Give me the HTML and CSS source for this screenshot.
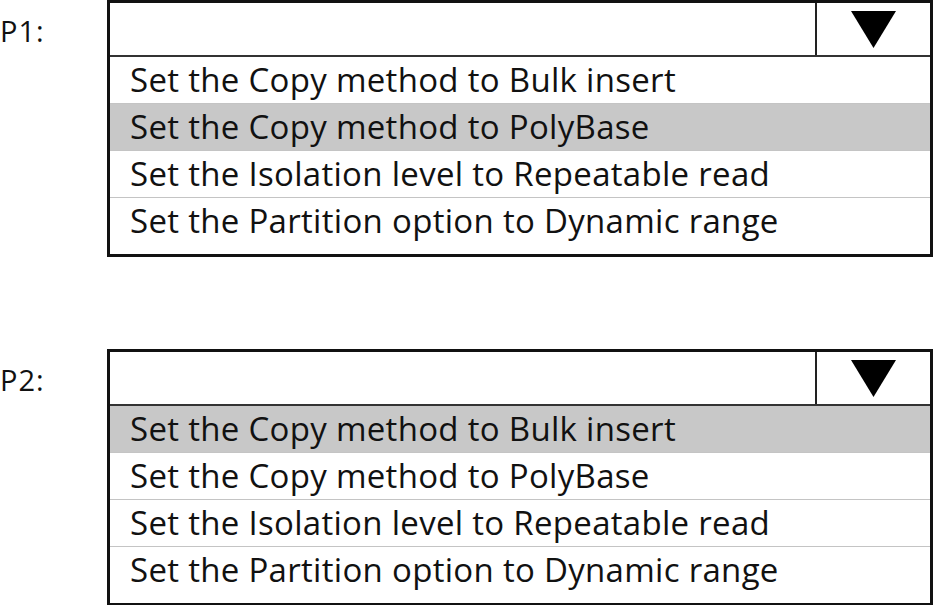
FILE: index.html
```html
<!DOCTYPE html>
<html lang="en">
<head>
  <meta charset="UTF-8">
  <title>Copy activity options</title>
  <link rel="stylesheet" href="styles.css">
</head>
<body>
<div class="page">
	<div class="field">
		<div class="label">P1:</div>
		<div class="dropdown">
			<div class="dropdown-head">
				<div class="value"></div>
				<div class="arrow">
					<svg width="45" height="37" viewBox="0 0 45 37"><polygon points="0,0 45,0 22.5,37" fill="#000"/></svg>
				</div>
			</div>
			<ul class="options">
				<li>Set the Copy method to Bulk insert</li>
				<li class="selected">Set the Copy method to PolyBase</li>
				<li>Set the Isolation level to Repeatable read</li>
				<li>Set the Partition option to Dynamic range</li>
			</ul>
		</div>
	</div>

	<div class="field">
		<div class="label">P2:</div>
		<div class="dropdown">
			<div class="dropdown-head">
				<div class="value"></div>
				<div class="arrow">
					<svg width="45" height="37" viewBox="0 0 45 37"><polygon points="0,0 45,0 22.5,37" fill="#000"/></svg>
				</div>
			</div>
			<ul class="options">
				<li class="selected">Set the Copy method to Bulk insert</li>
				<li>Set the Copy method to PolyBase</li>
				<li>Set the Isolation level to Repeatable read</li>
				<li>Set the Partition option to Dynamic range</li>
			</ul>
		</div>
	</div>
</div>
</body>
</html>
```

FILE: styles.css
```css
body {
	margin: 0;
	background: #fff;
	color: #111;
	font-family: "Open Sans", Lato, sans-serif;
	font-variant-ligatures: none;
}
.page {
	display: flex;
	flex-direction: column;
	gap: 92px;
}
.field {
	display: flex;
	align-items: flex-start;
}
.label {
	width: 107px;
	padding-top: 16px;
	font-size: 29px;
	line-height: 30px;
	letter-spacing: 1px;
}
.dropdown {
	width: 826px;
	border: 3px solid #111;
	box-sizing: border-box;
}
.dropdown-head {
	display: flex;
	height: 52px;
	border-bottom: 2px solid #333;
}
.value {
	flex: 1;
	border-right: 2px solid #222;
}
.arrow {
	width: 113px;
	display: flex;
	align-items: center;
	justify-content: center;
}
.options {
	list-style: none;
	margin: 0;
	padding: 0 0 10px 0;
}
.options li {
	height: 46px;
	line-height: 46px;
	padding-left: 20px;
	font-size: 33px;
	letter-spacing: 0.3px;
	border-top: 1px solid #c4c4c4;
}
.options li:first-child {
	border-top: none;
}
.options li.selected {
	background: #c8c8c8;
}
```
